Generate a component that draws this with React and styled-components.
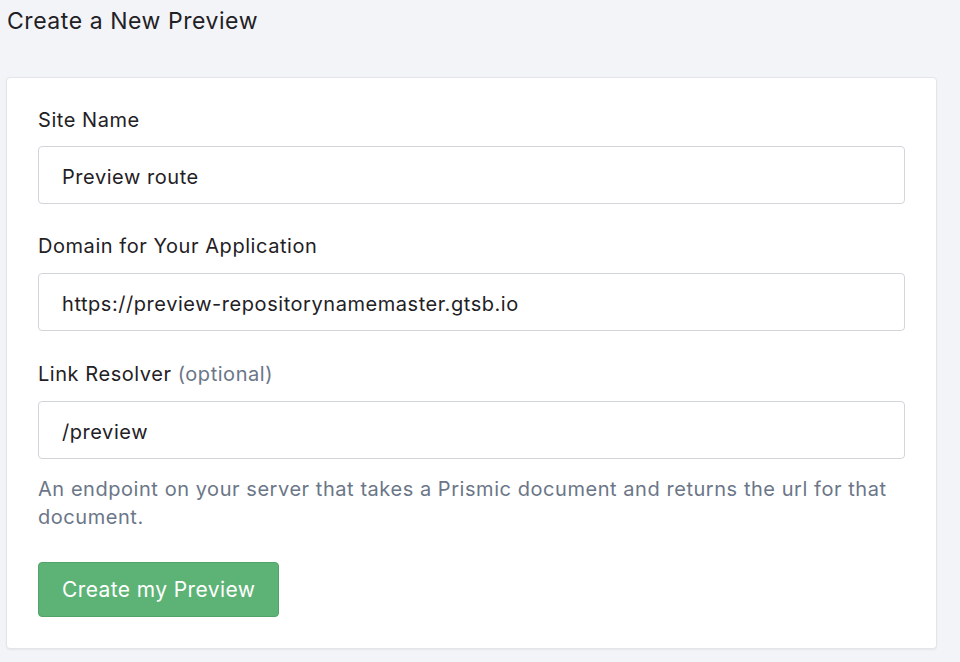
import React from "react";
import styled, { createGlobalStyle } from "styled-components";

const GlobalStyle = createGlobalStyle`
  body {
    margin: 0;
    background: #f3f4f8;
    font-family: "Inter", "Open Sans", sans-serif;
    letter-spacing: 0.55px;
    color: #1c1e21;
  }
`;

const Page = styled.div`
  width: 960px;
  height: 662px;
  padding: 6px 23px 0 6px;
  box-sizing: border-box;
  overflow: hidden;
`;

const Title = styled.h1`
  margin: 0 0 0 1px;
  font-size: 23px;
  font-weight: 400;
  line-height: 30px;
  color: #1f2125;
`;

const Card = styled.form`
  margin-top: 41px;
  background: #fff;
  border: 1px solid #e3e5ea;
  border-radius: 4px;
  box-shadow: 0 1px 2px rgba(0, 0, 0, 0.06);
  padding: 28px 31px 31px 31px;
  display: flex;
  flex-direction: column;
`;

const Field = styled.div`
  display: flex;
  flex-direction: column;
  margin-bottom: ${(p) => p.gap || 29}px;
`;

const Label = styled.label`
  font-size: 20px;
  line-height: 28px;
  color: #1f2125;
  margin-bottom: ${(p) => p.gap || 13}px;
`;

const Optional = styled.span`
  color: #6b7688;
`;

const Input = styled.input`
  height: 58px;
  box-sizing: border-box;
  border: 1px solid #d2d5da;
  border-radius: 4px;
  padding: 3px 23px 0;
  font-family: inherit;
  letter-spacing: inherit;
  font-size: 20px;
  color: #1f2125;
  outline: none;
`;

const Help = styled.p`
  margin: 16px 0 0;
  font-size: 20px;
  line-height: 28px;
  color: #6b7688;
`;

const Button = styled.button`
  align-self: flex-start;
  height: 55px;
  padding: 0 23px;
  border: 1px solid #51a36a;
  border-radius: 4px;
  background: #5db375;
  color: #fff;
  font-family: inherit;
  letter-spacing: 0.4px;
  font-size: 21px;
  cursor: pointer;
`;

export default function App() {
  return (
    <>
      <GlobalStyle />
      <Page>
        <Title>Create a New Preview</Title>
        <Card onSubmit={(e) => e.preventDefault()}>
          <Field gap={28}>
            <Label gap={12}>Site Name</Label>
            <Input defaultValue="Preview route" />
          </Field>
          <Field>
            <Label>Domain for Your Application</Label>
            <Input defaultValue="https://preview-repositorynamemaster.gtsb.io" />
          </Field>
          <Field gap={31}>
            <Label>
              Link Resolver <Optional>(optional)</Optional>
            </Label>
            <Input defaultValue="/preview" />
            <Help>
              An endpoint on your server that takes a Prismic document and
              returns the url for that document.
            </Help>
          </Field>
          <Button type="submit">Create my Preview</Button>
        </Card>
      </Page>
    </>
  );
}
